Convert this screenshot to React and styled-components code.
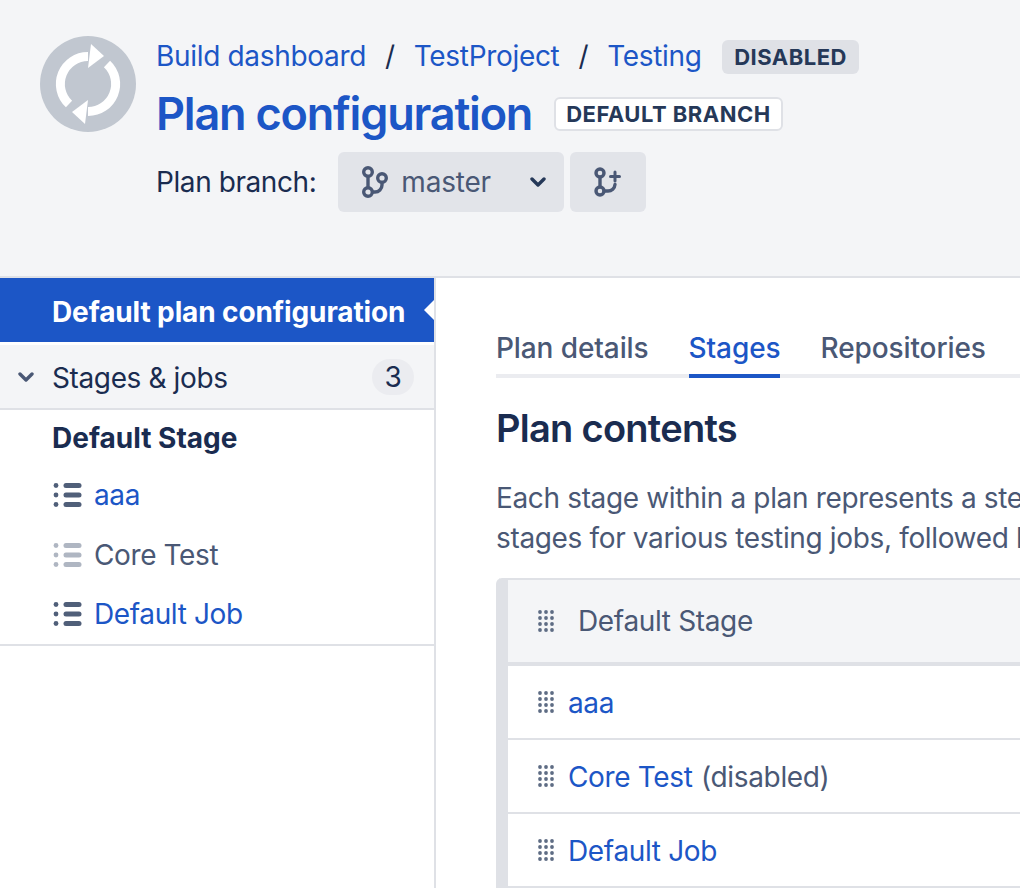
import React from "react";
import styled, { createGlobalStyle } from "styled-components";

const GlobalStyle = createGlobalStyle`
  html, body {
    margin: 0;
    padding: 0;
    background: #fff;
  }
  body {
    font-family: Inter, "Liberation Sans", sans-serif;
    color: #1a2c50;
    -webkit-font-smoothing: antialiased;
  }
`;

const Page = styled.div`
  width: 1020px;
  height: 888px;
  overflow: hidden;
  display: flex;
  flex-direction: column;
`;

const Header = styled.header`
  height: 276px;
  flex: none;
  background: #f4f5f7;
  border-bottom: 2px solid #dfe1e6;
  padding: 0 0 0 40px;
  display: flex;
  gap: 20px;
  align-items: flex-start;
`;

const Avatar = styled.svg`
  width: 96px;
  height: 96px;
  margin-top: 36px;
  flex: none;
`;

const HeaderText = styled.div`
  padding-top: 36px;
  display: flex;
  flex-direction: column;
`;

const Crumbs = styled.div`
  display: flex;
  align-items: center;
  height: 40px;
  font-size: 28px;
  letter-spacing: -0.32px;
  white-space: nowrap;
`;

const Link = styled.a`
  color: #1c56c6;
  text-decoration: none;
`;

const Slash = styled.span`
  color: #1a2c50;
  margin: 0 19px;
`;

const Tag = styled.span`
  display: inline-flex;
  align-items: center;
  height: 34px;
  box-sizing: border-box;
  padding: 0 ${(p) => (p.$outlined ? 10 : 12.5)}px;
  border-radius: 6px;
  font-size: 22px;
  font-weight: 700;
  letter-spacing: 0.5px;
  color: #253858;
  background: ${(p) => (p.$outlined ? "#fff" : "#dfe1e6")};
  ${(p) => p.$outlined && "border: 2px solid #dfe1e6;"}
  ${(p) => !p.$outlined && "margin: 2px 0 0 20px;"}
`;

const TitleRow = styled.div`
  display: flex;
  align-items: center;
  gap: 22px;
  height: 56px;
  margin-top: 10px;
  white-space: nowrap;
`;

const Title = styled.h1`
  margin: -2px 0 0;
  font-size: 45px;
  font-weight: 600;
  letter-spacing: -1.2px;
  color: #1c56c6;
`;

const BranchRow = styled.div`
  display: flex;
  align-items: center;
  gap: 6px;
  height: 60px;
  margin-top: 10px;
`;

const BranchLabel = styled.span`
  font-size: 28px;
  letter-spacing: -0.42px;
  margin-right: 16px;
  white-space: nowrap;
`;

const Button = styled.div`
  display: flex;
  align-items: center;
  box-sizing: border-box;
  height: 60px;
  width: ${(p) => p.$width}px;
  padding: 0 18px 0 24px;
  background: #e2e4e9;
  border-radius: 6px;
  font-size: 28px;
  letter-spacing: -0.2px;
  color: #4a5875;
`;

const BranchName = styled.span`
  margin-left: 11px;
  flex: 1;
`;

const Body = styled.div`
  flex: 1;
  display: flex;
  min-height: 0;
`;

const Sidebar = styled.nav`
  width: 434px;
  flex: none;
  border-right: 2px solid #dfe1e6;
  font-size: 28px;
  letter-spacing: -0.38px;
`;

const ActiveItem = styled.div`
  position: relative;
  box-sizing: border-box;
  height: 64px;
  padding: 3px 0 0 52px;
  display: flex;
  align-items: center;
  background: #1c56c6;
  color: #fff;
  font-weight: 700;
  letter-spacing: -0.12px;
  white-space: nowrap;

  &::after {
    content: "";
    position: absolute;
    right: 0;
    top: 22px;
    border: 10px solid transparent;
    border-left-width: 0;
    border-right-color: #fff;
  }
`;

const GroupRow = styled.div`
  margin-top: 3px;
  height: 63px;
  display: flex;
  align-items: center;
  background: #f4f5f7;
  border-bottom: 2px solid #dfe1e6;
  padding: 0 20px 0 18px;
`;

const GroupChevron = styled.svg`
  width: 16px;
  height: 10px;
  margin-right: 18px;
  flex: none;
`;

const GroupName = styled.span`
  flex: 1;
  padding-top: 2px;
`;

const Count = styled.span`
  width: 42px;
  height: 36px;
  border-radius: 18px;
  background: #ebecf0;
  display: flex;
  align-items: center;
  justify-content: center;
`;

const JobList = styled.div`
  padding: 8px 0 0 52px;
  height: 236px;
  box-sizing: border-box;
  border-bottom: 2px solid #dfe1e6;
`;

const StageName = styled.div`
  height: 40px;
  line-height: 40px;
  font-weight: 700;
  letter-spacing: 0;
  margin-bottom: 17px;
`;

const JobRow = styled.div`
  display: flex;
  align-items: center;
  gap: 12px;
  height: 40px;
  margin-bottom: 19.5px;
  color: #4a5875;
`;

const JobIcon = styled.svg`
  width: 30px;
  height: 26px;
  flex: none;
  opacity: ${(p) => (p.$faded ? 0.45 : 1)};
`;

const Main = styled.main`
  flex: 1;
  min-width: 0;
  overflow: hidden;
  padding: 48px 0 0 60px;
`;

const Tabs = styled.div`
  display: flex;
  gap: 40px;
  height: 48px;
  border-bottom: 4px solid #ebecf0;
  font-size: 28px;
  font-weight: 500;
  letter-spacing: -0.1px;
  color: #4a5875;
  white-space: nowrap;
`;

const Tab = styled.div`
  height: 48px;
  line-height: 44px;
  ${(p) => p.$active && "color: #1c56c6; border-bottom: 4px solid #1c56c6;"}
`;

const Heading = styled.h2`
  margin: 26px 0 0;
  font-size: 38px;
  line-height: 48px;
  font-weight: 600;
  letter-spacing: -0.72px;
  color: #1a2c50;
  white-space: nowrap;
`;

const Lead = styled.p`
  margin: 26px 0 0;
  font-size: 28px;
  line-height: 40px;
  letter-spacing: -0.35px;
  color: #4a5875;
  white-space: nowrap;
`;

const StageCard = styled.div`
  margin-top: 20px;
  border-left: 12px solid #dfe1e6;
  border-top: 2px solid #dfe1e6;
  border-top-left-radius: 6px;
  font-size: 28px;
  letter-spacing: -0.35px;
  white-space: nowrap;
`;

const StageHeader = styled.div`
  height: 82px;
  display: flex;
  align-items: center;
  padding-left: 30px;
  gap: 24px;
  background: #f4f5f7;
  border-bottom: 4px solid #dfe1e6;
  color: #4a5875;
`;

const StageRow = styled.div`
  box-sizing: border-box;
  height: 74px;
  display: flex;
  align-items: center;
  padding: 2px 0 0 30px;
  gap: 14px;
  border-bottom: 2px solid #dfe1e6;
`;

const Note = styled.span`
  color: #4a5875;
  margin-left: -5.5px;
`;

const Grip = styled.svg`
  width: 16px;
  height: 22px;
  flex: none;
  ${(p) => p.$raised && "margin-top: -2px;"}
`;

const BranchIcon = ({ plus }) => (
  <svg width="28" height="32" viewBox="0 0 28 32" fill="none" stroke="#4a5875" strokeWidth="3.4">
    {plus ? (
      <>
        <circle cx="6" cy="7" r="4" />
        <circle cx="6" cy="25" r="4" />
        <path d="M6 11v10" />
        <path d="M10 25h4a7 7 0 0 0 7-6.5" strokeLinecap="round" />
        <path d="M21 6v9M16.5 10.5h9" strokeWidth="3" strokeLinecap="round" />
      </>
    ) : (
      <>
        <circle cx="6" cy="6" r="4.3" />
        <circle cx="6" cy="26" r="4.3" />
        <path d="M6 10v12" />
        <circle cx="20" cy="12" r="4.3" />
        <path d="M10 26h3a7 7 0 0 0 7-7v-3" />
      </>
    )}
  </svg>
);

const Chevron = () => (
  <svg width="16" height="10" viewBox="0 0 16 10" fill="none" stroke="#253858" strokeWidth="3.4" strokeLinecap="round" strokeLinejoin="round">
    <path d="M2 2l6 6 6-6" />
  </svg>
);

const JobGlyph = ({ faded }) => (
  <JobIcon $faded={faded} viewBox="0 0 30 26">
    {[3.5, 13, 22.5].map((y) => (
      <g key={y} fill="#505f79">
        <circle cx="4" cy={y} r="2.4" />
        <rect x="11.5" y={y - 2.5} width="18" height="5" rx="2.5" />
      </g>
    ))}
  </JobIcon>
);

const GripGlyph = ({ raised }) => (
  <Grip $raised={raised} viewBox="0 0 16 22" fill="#5e6c84">
    {[2, 8, 14, 20].map((y) =>
      [2, 8, 14].map((x) => <circle key={`${x}-${y}`} cx={x} cy={y} r="1.9" />)
    )}
  </Grip>
);

export default function App() {
  return (
    <>
      <GlobalStyle />
      <Page>
        <Header>
          <Avatar viewBox="0 0 96 96">
            <circle cx="48" cy="48" r="48" fill="#c1c7d0" />
            <g fill="none" stroke="#fff" strokeWidth="9">
              <path d="M29 68A27.5 27.5 0 0 1 48 20.5" />
              <path d="M67 28A27.5 27.5 0 0 1 48 75.5" />
            </g>
            <path d="M64 20L51 8 48 32z" fill="#fff" />
            <path d="M32 76L45 88 48 64z" fill="#fff" />
          </Avatar>
          <HeaderText>
            <Crumbs>
              <Link>Build dashboard</Link>
              <Slash>/</Slash>
              <Link>TestProject</Link>
              <Slash>/</Slash>
              <Link>Testing</Link>
              <Tag>DISABLED</Tag>
            </Crumbs>
            <TitleRow>
              <Title>Plan configuration</Title>
              <Tag $outlined>DEFAULT BRANCH</Tag>
            </TitleRow>
            <BranchRow>
              <BranchLabel>Plan branch:</BranchLabel>
              <Button $width={226}>
                <BranchIcon />
                <BranchName>master</BranchName>
                <Chevron />
              </Button>
              <Button $width={76}>
                <BranchIcon plus />
              </Button>
            </BranchRow>
          </HeaderText>
        </Header>
        <Body>
          <Sidebar>
            <ActiveItem>Default plan configuration</ActiveItem>
            <GroupRow>
              <GroupChevron viewBox="0 0 16 10" fill="none" stroke="#4a5875" strokeWidth="3.4" strokeLinecap="round" strokeLinejoin="round">
                <path d="M2 2l6 6 6-6" />
              </GroupChevron>
              <GroupName>Stages &amp; jobs</GroupName>
              <Count>3</Count>
            </GroupRow>
            <JobList>
              <StageName>Default Stage</StageName>
              <JobRow>
                <JobGlyph />
                <Link>aaa</Link>
              </JobRow>
              <JobRow>
                <JobGlyph faded />
                Core Test
              </JobRow>
              <JobRow>
                <JobGlyph />
                <Link>Default Job</Link>
              </JobRow>
            </JobList>
          </Sidebar>
          <Main>
            <Tabs>
              <Tab>Plan details</Tab>
              <Tab $active>Stages</Tab>
              <Tab>Repositories</Tab>
            </Tabs>
            <Heading>Plan contents</Heading>
            <Lead>
              Each stage within a plan represents a step in your build process.
              <br />
              stages for various testing jobs, followed by a stage for deployment jobs.
            </Lead>
            <StageCard>
              <StageHeader>
                <GripGlyph />
                Default Stage
              </StageHeader>
              <StageRow>
                <GripGlyph raised />
                <Link>aaa</Link>
              </StageRow>
              <StageRow>
                <GripGlyph raised />
                <Link>Core Test</Link>
                <Note>(disabled)</Note>
              </StageRow>
              <StageRow>
                <GripGlyph raised />
                <Link>Default Job</Link>
              </StageRow>
            </StageCard>
          </Main>
        </Body>
      </Page>
    </>
  );
}
